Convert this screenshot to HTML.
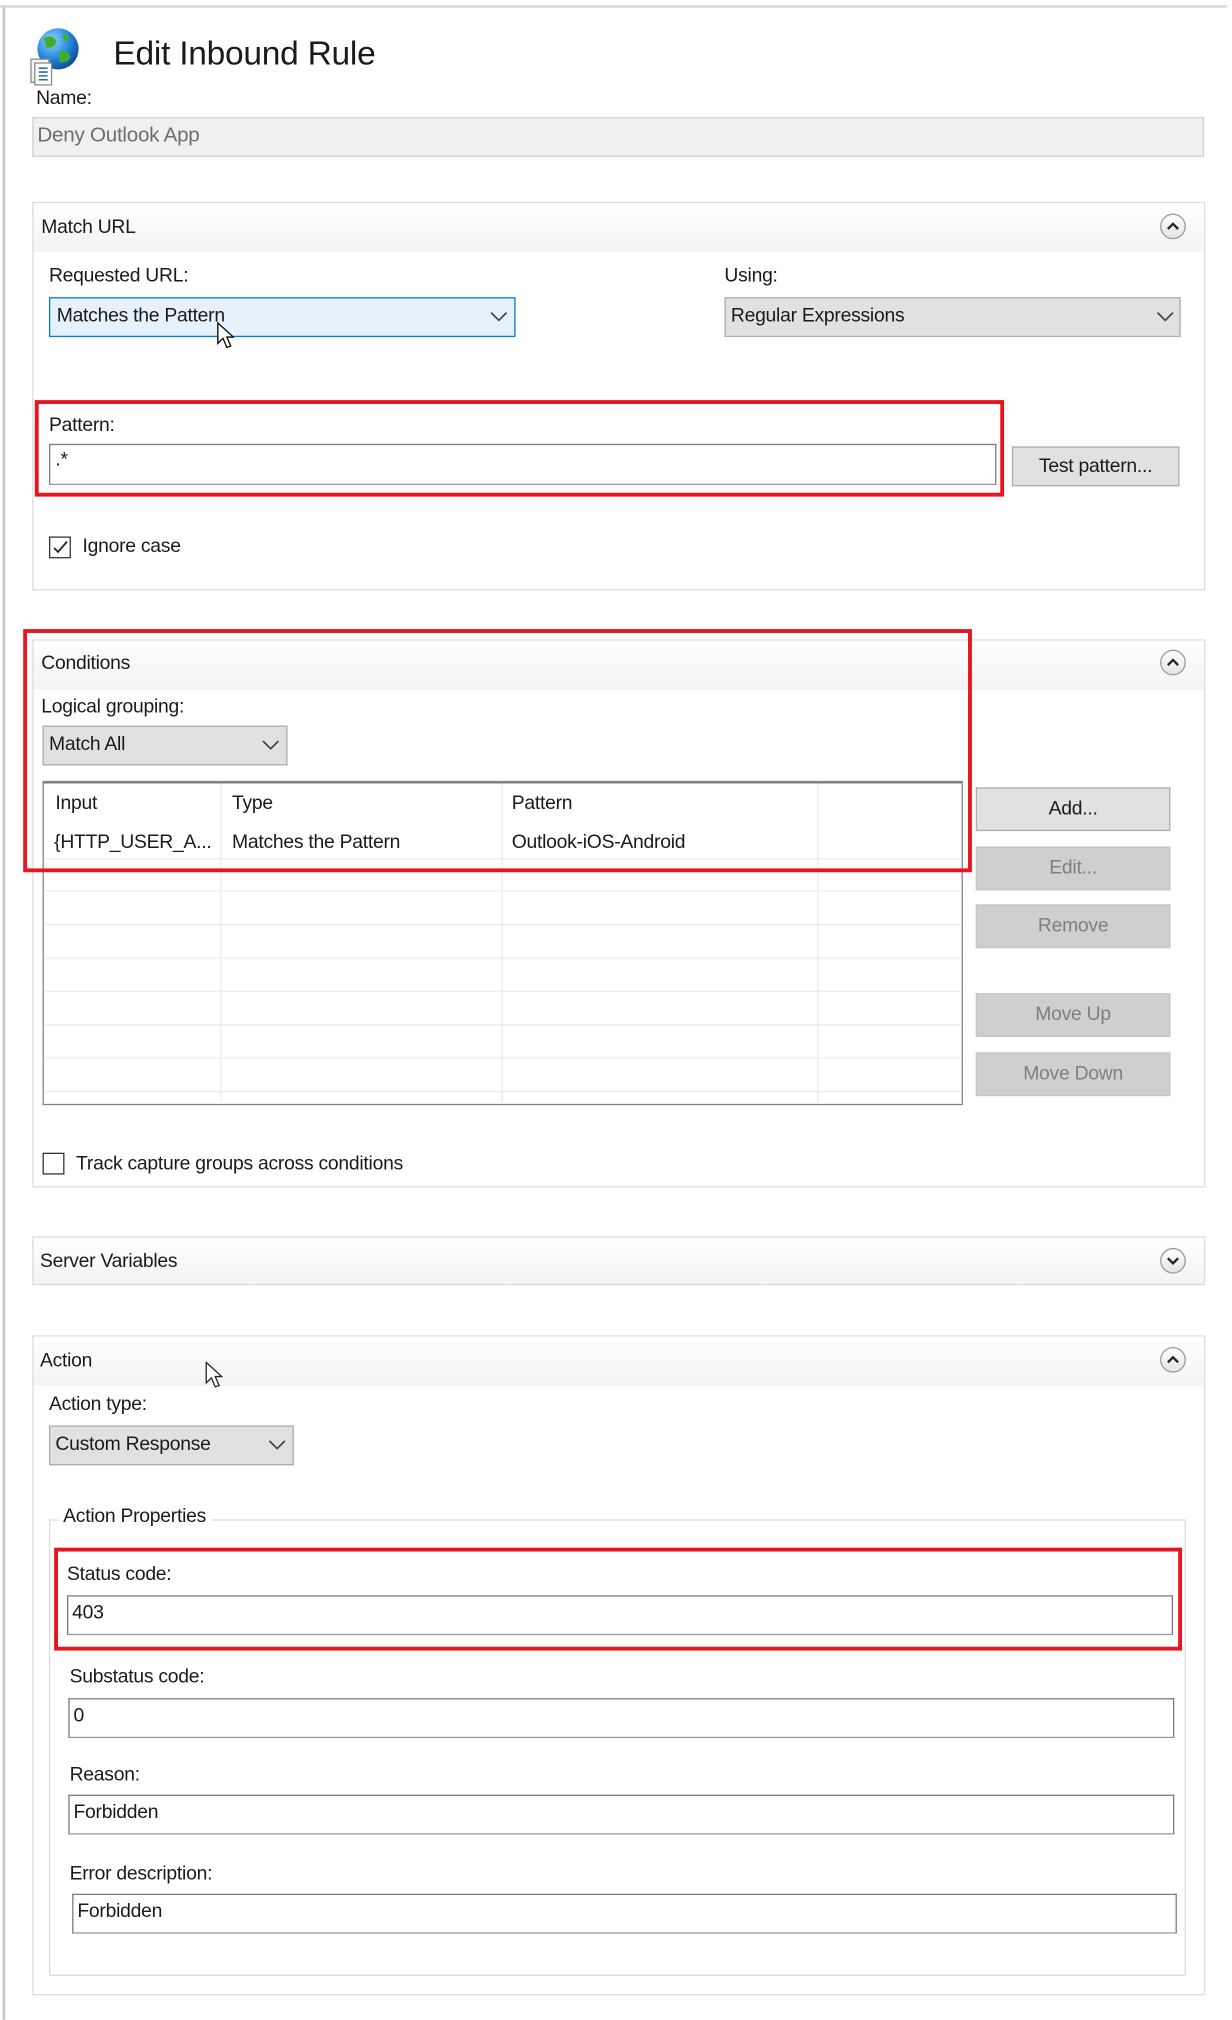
<!DOCTYPE html>
<html><head><meta charset="utf-8"><style>
html,body{margin:0;padding:0;background:#fff;width:1232px;height:2018px;overflow:hidden}
#s{position:absolute;left:0;top:0;width:960px;height:1570px;transform-origin:0 0;transform:scale(1.289,1.2865);font-family:"Liberation Sans",sans-serif;font-size:15px;color:#1a1a1a;letter-spacing:-0.2px}
#s div{position:absolute;box-sizing:border-box}
.t{white-space:nowrap;line-height:18px}
.panel{border:1px solid #dcdcdc;background:#fff}
.hdr{left:0;top:0;right:0;height:38px;background:linear-gradient(#fff,#f3f3f3)}
.circ{width:20px;height:20px;border:1px solid #9a9a9a;border-radius:50%;background:linear-gradient(#fff,#e4e4e4)}
.dd{background:#e1e1e1;border:1px solid #adadad}
.inp{background:#fff;border:1px solid #7a7a7a;border-bottom-color:#9a9a9a}
.btn{background:#cfcfcf;border:1px solid #c4c4c4;text-align:center;line-height:31px;color:#7f7f7f;font-size:15px}
.red{border:3px solid #e8141f}
.gl{height:1px;background:#ececec}
.vl{width:1px;background:#ececec}
</style></head><body><div id="s">
<div style="left:0;top:4px;width:952px;height:2px;background:#d8d8d8"></div>
<div style="left:2px;top:5px;width:2px;height:1565px;background:#c8c8c8"></div>
<svg style="position:absolute;left:20px;top:20px" width="44" height="48" viewBox="0 0 44 48">
<defs><radialGradient id="g" cx="0.35" cy="0.3" r="0.8"><stop offset="0" stop-color="#8fd3ff"/><stop offset="0.6" stop-color="#1e7fd8"/><stop offset="1" stop-color="#0b3f8a"/></radialGradient></defs>
<circle cx="25" cy="18" r="16" fill="url(#g)"/>
<path d="M14 10 q6 -4 10 2 q-2 6 -8 5z M26 20 q6 -2 9 4 q-3 6 -9 4z M30 6 q4 2 4 6 q-4 0 -6 -3z" fill="#3fae2a"/>
<rect x="4" y="26" width="14" height="18" fill="#f4f4f4" stroke="#8a8a8a"/>
<rect x="7" y="29" width="13" height="17" fill="#fff" stroke="#8a8a8a"/>
<path d="M10 33h7M10 36h7M10 39h7M10 42h7" stroke="#2d6cc0" stroke-width="1.2"/>
</svg>
<div class="t" style="left:88px;top:26px;font-size:26px;line-height:30px;color:#1a1a1a">Edit Inbound Rule</div>
<div class="t" style="left:28px;top:68px">Name:</div>
<div style="left:25px;top:91px;width:909px;height:31px;background:#f0f0f0;border:1px solid #d2d2d2"></div>
<div class="t" style="left:29px;top:97px;color:#6d6d6d;font-size:16px">Deny Outlook App</div>

<div class="panel" style="left:25px;top:157px;width:910px;height:302px"><div class="hdr"></div></div>
<div class="t" style="left:32px;top:168px">Match URL</div>
<div class="circ" style="left:900px;top:166px"></div>
<svg style="position:absolute;left:904px;top:171px" width="12" height="9"><path d="M2 7l4-4 4 4" fill="none" stroke="#222" stroke-width="1.8"/></svg>
<div class="t" style="left:38px;top:206px">Requested URL:</div>
<div style="left:38px;top:231px;width:362px;height:31px;background:#e5f1fb;border:1px solid #0078d7"></div>
<div class="t" style="left:44px;top:237px">Matches the Pattern</div>
<svg style="position:absolute;left:380px;top:241px" width="14" height="10"><path d="M1 2l6 6 6-6" fill="none" stroke="#444" stroke-width="1.3"/></svg>
<svg style="position:absolute;left:168px;top:250px" width="14" height="22"><path d="M1 1v16l4-4 3 7 3-1-3-7h5z" fill="#fff" stroke="#000"/></svg>
<div class="t" style="left:562px;top:206px">Using:</div>
<div class="dd" style="left:562px;top:231px;width:354px;height:31px"></div>
<div class="t" style="left:567px;top:237px">Regular Expressions</div>
<svg style="position:absolute;left:897px;top:241px" width="14" height="10"><path d="M1 2l6 6 6-6" fill="none" stroke="#444" stroke-width="1.3"/></svg>
<div class="red" style="left:27px;top:311px;width:752px;height:75px"></div>
<div class="t" style="left:38px;top:322px">Pattern:</div>
<div class="inp" style="left:38px;top:345px;width:735px;height:32px"></div>
<div class="t" style="left:43px;top:349px">.*</div>
<div class="dd" style="left:785px;top:347px;width:130px;height:31px;text-align:center;line-height:29px">Test pattern...</div>
<div style="left:38px;top:417px;width:17px;height:17px;border:1px solid #333;background:#fff"></div>
<svg style="position:absolute;left:40px;top:419px" width="14" height="13"><path d="M2 7l3 3 7-8" fill="none" stroke="#222" stroke-width="1.4"/></svg>
<div class="t" style="left:64px;top:416px">Ignore case</div>

<div class="panel" style="left:25px;top:497px;width:910px;height:426px"><div class="hdr"></div></div>
<div class="t" style="left:32px;top:507px">Conditions</div>
<div class="circ" style="left:900px;top:505px"></div>
<svg style="position:absolute;left:904px;top:510px" width="12" height="9"><path d="M2 7l4-4 4 4" fill="none" stroke="#222" stroke-width="1.8"/></svg>
<div class="t" style="left:32px;top:541px">Logical grouping:</div>
<div class="dd" style="left:33px;top:564px;width:190px;height:31px"></div>
<div class="t" style="left:38px;top:570px">Match All</div>
<svg style="position:absolute;left:203px;top:574px" width="14" height="10"><path d="M1 2l6 6 6-6" fill="none" stroke="#444" stroke-width="1.3"/></svg>
<div style="left:33px;top:607px;width:714px;height:252px;border:1px solid #828282;border-top-width:2px;background:#fff"></div>
<div class="vl" style="left:171px;top:609px;height:248px"></div>
<div class="vl" style="left:389px;top:609px;height:248px"></div>
<div class="vl" style="left:634px;top:609px;height:248px"></div>
<div class="gl" style="left:35px;top:667px;width:710px"></div>
<div class="gl" style="left:35px;top:692px;width:710px"></div>
<div class="gl" style="left:35px;top:718px;width:710px"></div>
<div class="gl" style="left:35px;top:744px;width:710px"></div>
<div class="gl" style="left:35px;top:770px;width:710px"></div>
<div class="gl" style="left:35px;top:796px;width:710px"></div>
<div class="gl" style="left:35px;top:822px;width:710px"></div>
<div class="gl" style="left:35px;top:848px;width:710px"></div>
<div class="t" style="left:43px;top:616px">Input</div>
<div class="t" style="left:180px;top:616px">Type</div>
<div class="t" style="left:397px;top:616px">Pattern</div>
<div class="t" style="left:42px;top:646px">{HTTP_USER_A...</div>
<div class="t" style="left:180px;top:646px">Matches the Pattern</div>
<div class="t" style="left:397px;top:646px">Outlook-iOS-Android</div>
<div class="red" style="left:18px;top:489px;width:736px;height:189px"></div>
<div class="btn" style="left:757px;top:612px;width:151px;height:34px;color:#1a1a1a;background:#e1e1e1;border-color:#adadad">Add...</div>
<div class="btn" style="left:757px;top:658px;width:151px;height:34px">Edit...</div>
<div class="btn" style="left:757px;top:703px;width:151px;height:34px">Remove</div>
<div class="btn" style="left:757px;top:772px;width:151px;height:34px">Move Up</div>
<div class="btn" style="left:757px;top:818px;width:151px;height:34px">Move Down</div>
<div style="left:33px;top:896px;width:17px;height:17px;border:1px solid #333;background:#fff"></div>
<div class="t" style="left:59px;top:896px">Track capture groups across conditions</div>

<div class="panel" style="left:25px;top:961px;width:910px;height:38px;background:linear-gradient(#fff,#f3f3f3)"></div>
<div class="t" style="left:31px;top:972px">Server Variables</div>
<div class="circ" style="left:900px;top:970px"></div>
<svg style="position:absolute;left:904px;top:976px" width="12" height="9"><path d="M2 2l4 4 4-4" fill="none" stroke="#222" stroke-width="1.8"/></svg>

<div class="panel" style="left:25px;top:1038px;width:910px;height:513px"><div class="hdr"></div></div>
<div class="t" style="left:31px;top:1049px">Action</div>
<div class="circ" style="left:900px;top:1047px"></div>
<svg style="position:absolute;left:904px;top:1052px" width="12" height="9"><path d="M2 7l4-4 4 4" fill="none" stroke="#222" stroke-width="1.8"/></svg>
<svg style="position:absolute;left:159px;top:1058px" width="18" height="24"><path d="M1 1v16l4-4 3 7 3-1-3-7h5z" fill="#fff" stroke="#222"/></svg>
<div class="t" style="left:38px;top:1083px">Action type:</div>
<div class="dd" style="left:38px;top:1108px;width:190px;height:31px"></div>
<div class="t" style="left:43px;top:1114px">Custom Response</div>
<svg style="position:absolute;left:208px;top:1118px" width="14" height="10"><path d="M1 2l6 6 6-6" fill="none" stroke="#444" stroke-width="1.3"/></svg>
<div style="left:38px;top:1181px;width:882px;height:355px;border:1px solid #dcdcdc"></div>
<div class="t" style="left:45px;top:1170px;background:#fff;padding:0 4px">Action Properties</div>
<div class="red" style="left:42px;top:1203px;width:875px;height:80px"></div>
<div class="t" style="left:52px;top:1215px">Status code:</div>
<div class="inp" style="left:52px;top:1240px;width:858px;height:31px"></div>
<div class="t" style="left:56px;top:1245px">403</div>
<div class="t" style="left:54px;top:1295px">Substatus code:</div>
<div class="inp" style="left:53px;top:1320px;width:858px;height:31px"></div>
<div class="t" style="left:57px;top:1325px">0</div>
<div class="t" style="left:54px;top:1371px">Reason:</div>
<div class="inp" style="left:53px;top:1395px;width:858px;height:31px"></div>
<div class="t" style="left:57px;top:1400px">Forbidden</div>
<div class="t" style="left:54px;top:1448px">Error description:</div>
<div class="inp" style="left:56px;top:1472px;width:857px;height:31px"></div>
<div class="t" style="left:60px;top:1477px">Forbidden</div>
</div></body></html>
